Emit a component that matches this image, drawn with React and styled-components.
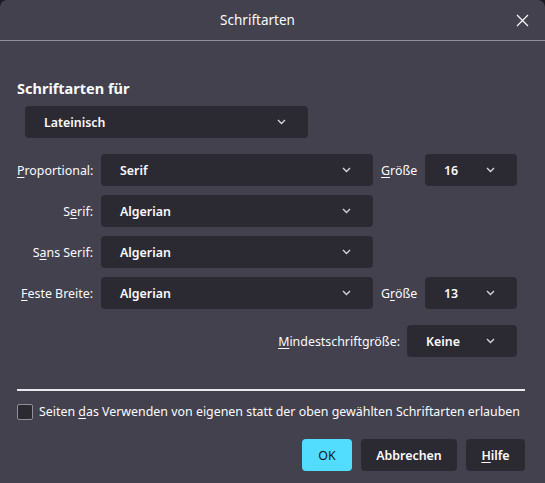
import React from 'react';
import styled, { createGlobalStyle } from 'styled-components';

const GlobalStyle = createGlobalStyle`
  html, body {
    margin: 0;
    padding: 0;
    background: #1c1b22;
  }
  body {
    font-family: "Noto Sans", "Open Sans", sans-serif;
    font-size: 12.4px;
    color: #fbfbfe;
  }
`;

const Dialog = styled.div`
  width: 545px;
  height: 483px;
  background: #42414d;
  border-radius: 7px 7px 0 0;
  display: flex;
  flex-direction: column;
  overflow: hidden;
`;

const TitleBar = styled.div`
  height: 40px;
  flex: 0 0 40px;
  border-bottom: 1px solid #8f8f9d;
  display: flex;
  align-items: center;
  position: relative;
`;

const Title = styled.div`
  flex: 1;
  text-align: center;
  padding-right: 30px;
  font-size: 13.5px;
`;

const CloseButton = styled.button`
  position: absolute;
  right: 16px;
  top: 14px;
  width: 13px;
  height: 13px;
  padding: 0;
  border: none;
  background: none;
  display: flex;
`;

const Body = styled.div`
  padding: 37px 20px 0 17px;
  display: flex;
  flex-direction: column;
`;

const Heading = styled.h2`
  margin: 0;
  font-size: 14.5px;
  font-weight: 700;
  line-height: 20px;
`;

const SelectBox = styled.div`
  box-sizing: border-box;
  height: 32px;
  width: ${p => p.$width || 'auto'};
  background: #2b2a33;
  border-radius: 4px;
  display: flex;
  align-items: center;
  justify-content: space-between;
  padding: 0 22px 0 19px;
  font-weight: 600;
  margin: ${p => p.$margin || '0'};
`;

const FontGrid = styled.div`
  display: grid;
  grid-template-columns: 76px 272px 36px 92px;
  column-gap: 8px;
  row-gap: 9px;
  align-items: center;
  margin-top: 16px;
`;

const Label = styled.label`
  text-align: ${p => (p.$left ? 'left' : 'right')};
  white-space: nowrap;
`;

const Key = styled.u`
  text-decoration: underline;
  text-underline-offset: 2px;
`;

const MinRow = styled.div`
  display: flex;
  justify-content: flex-end;
  align-items: center;
  gap: 7px;
  margin-top: 16px;
  padding-right: 8px;
`;

const Divider = styled.hr`
  margin: 32px 0 0;
  border: none;
  border-top: 2px solid #e8e8ee;
`;

const CheckRow = styled.label`
  display: flex;
  align-items: center;
  gap: 6px;
  margin-top: 12px;
  white-space: nowrap;
`;

const Checkbox = styled.span`
  box-sizing: border-box;
  flex: 0 0 16px;
  width: 16px;
  height: 16px;
  border: 1px solid #8f8f9d;
  border-radius: 2px;
  background: #2b2a33;
`;

const ButtonRow = styled.div`
  display: flex;
  justify-content: flex-end;
  gap: 9px;
  margin-top: 19px;
`;

const Button = styled.button`
  height: 32px;
  width: ${p => p.$width};
  padding: 0;
  border: none;
  border-radius: 4px;
  font-family: inherit;
  font-size: 12.4px;
  font-weight: ${p => (p.$primary ? 400 : 600)};
  background: ${p => (p.$primary ? '#52ddff' : '#2b2a33')};
  color: ${p => (p.$primary ? '#15141a' : '#fbfbfe')};
`;

const Chevron = () => (
  <svg width="9" height="6" viewBox="0 0 9 6">
    <path d="M1 1l3.5 3.5L8 1" fill="none" stroke="#d8d8de" strokeWidth="1.3" />
  </svg>
);

const Select = ({ value, width, margin }) => (
  <SelectBox $width={width} $margin={margin}>
    <span>{value}</span>
    <Chevron />
  </SelectBox>
);

const fontRows = [
  { label: <><Key>P</Key>roportional:</>, value: 'Serif', size: '16', sizeLabel: <><Key>G</Key>röße</> },
  { label: <>S<Key>e</Key>rif:</>, value: 'Algerian' },
  { label: <>S<Key>a</Key>ns Serif:</>, value: 'Algerian' },
  { label: <><Key>F</Key>este Breite:</>, value: 'Algerian', size: '13', sizeLabel: <>G<Key>r</Key>öße</> },
];

export default function App() {
  return (
    <>
      <GlobalStyle />
      <Dialog>
        <TitleBar>
          <Title>Schriftarten</Title>
          <CloseButton aria-label="Schließen">
            <svg width="13" height="13" viewBox="0 0 13 13">
              <path d="M1 1l11 11M12 1L1 12" stroke="#fbfbfe" strokeWidth="1.2" />
            </svg>
          </CloseButton>
        </TitleBar>
        <Body>
          <Heading>Schriftarten für</Heading>
          <Select value="Lateinisch" width="283px" margin="8px 0 0 8px" />
          <FontGrid>
            {fontRows.map((row, i) => (
              <React.Fragment key={i}>
                <Label>{row.label}</Label>
                <Select value={row.value} />
                {row.size ? (
                  <>
                    <Label $left>{row.sizeLabel}</Label>
                    <Select value={row.size} />
                  </>
                ) : (
                  <>
                    <span />
                    <span />
                  </>
                )}
              </React.Fragment>
            ))}
          </FontGrid>
          <MinRow>
            <Label><Key>M</Key>indestschriftgröße:</Label>
            <Select value="Keine" width="110px" />
          </MinRow>
          <Divider />
          <CheckRow>
            <Checkbox />
            <span>Seiten <Key>d</Key>as Verwenden von eigenen statt der oben gewählten Schriftarten erlauben</span>
          </CheckRow>
          <ButtonRow>
            <Button $primary $width="50px">OK</Button>
            <Button $width="96px">Abbrechen</Button>
            <Button $width="59px"><Key>H</Key>ilfe</Button>
          </ButtonRow>
        </Body>
      </Dialog>
    </>
  );
}
